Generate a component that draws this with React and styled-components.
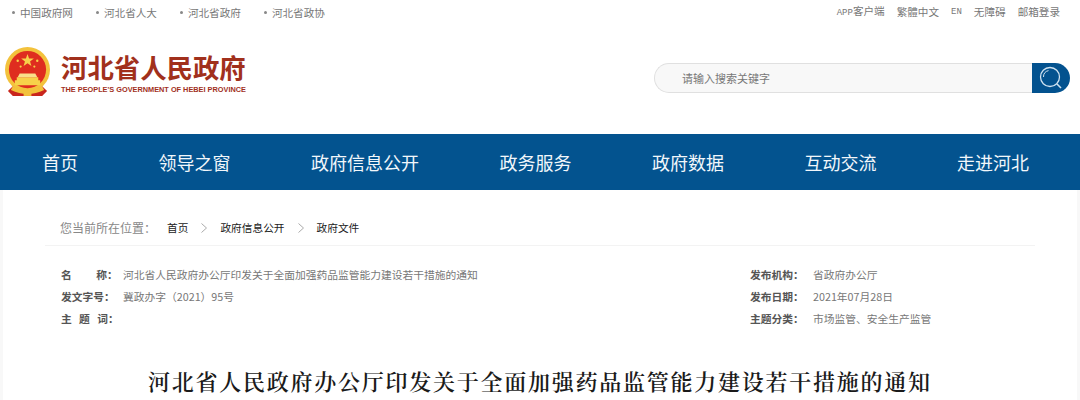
import styled, { createGlobalStyle } from "styled-components";

const CJK = `"Noto Sans CJK SC", "Liberation Sans", sans-serif`;

const GlobalStyle = createGlobalStyle`
  html, body { margin: 0; padding: 0; background: #fff; }
  body { font-family: ${CJK}; }
`;

const Page = styled.div`
  width: 1080px;
  height: 400px;
  overflow: hidden;
  background: #fff;
`;

const TopBar = styled.div`
  display: flex;
  justify-content: space-between;
  height: 24px;
  padding: 0 20px 0 12px;
  align-items: center;
  font-size: 10.6px;
  color: #777;
`;

const SiteLinks = styled.div`
  display: flex;
  gap: 23px;
`;

const SiteLink = styled.span`
  display: flex;
  align-items: center;
  gap: 5px;
  &::before {
    content: "";
    width: 3px;
    height: 3px;
    border-radius: 50%;
    background: #888;
  }
`;

const ToolLinks = styled.div`
  display: flex;
  gap: 12px;
  align-items: center;
  line-height: 14px;
`;

const Latin = styled.span`
  font-family: "Liberation Mono", monospace;
  font-size: 9px;
`;

const Masthead = styled.div`
  display: flex;
  justify-content: space-between;
  align-items: center;
  height: 110px;
  padding: 0 10px 2px 5px;
  box-sizing: border-box;
`;

const Brand = styled.div`
  display: flex;
  gap: 11px;
  align-items: center;
  margin-bottom: 13px;
`;

const BrandText = styled.div`
  display: flex;
  flex-direction: column;
  width: 184px;
  margin-top: 3px;
`;

const BrandName = styled.div`
  font-size: 26.4px;
  line-height: 32px;
  font-weight: 700;
  color: #a1301c;
  white-space: nowrap;
`;

const BrandEnglish = styled.div`
  font-family: "Liberation Sans", sans-serif;
  font-size: 7.35px;
  line-height: 10px;
  margin-top: 2px;
  font-weight: 700;
  color: #a1301c;
  white-space: nowrap;
`;

const Search = styled.div`
  display: flex;
  width: 416px;
  height: 30px;
`;

const SearchField = styled.div`
  flex: 1;
  box-sizing: border-box;
  border: 1px solid #e0e0e0;
  border-right: none;
  border-radius: 15px 0 0 15px;
  background: #f8f8f8;
  padding-left: 27px;
  font-size: 11px;
  line-height: 28px;
  color: #777;
`;

const SearchButton = styled.div`
  width: 38px;
  height: 30px;
  background: #03528f;
  border-radius: 0 15px 15px 0;
  display: flex;
  align-items: center;
  justify-content: center;
`;

const Nav = styled.nav`
  display: flex;
  justify-content: space-between;
  height: 56px;
  align-items: center;
  padding: 0 51px 0 42px;
  background: #03538f;
  color: #f2f7fb;
  font-size: 18px;
`;

const NavItem = styled.span`
  white-space: nowrap;
`;

const Body = styled.div`
  padding: 0 3px;
  background: #f8f8f8;
`;

const Main = styled.main`
  padding: 0 42px;
  background: #fff;
  height: 210px;
`;

const Crumbs = styled.div`
  display: flex;
  align-items: center;
  box-sizing: border-box;
  height: 56px;
  padding: 20px 0 0 15px;
  border-bottom: 1px solid #f3f3f3;
  font-size: 10.7px;
  color: #222;
`;

const CrumbLead = styled.span`
  font-size: 12px;
  color: #888;
  margin-right: 11px;
`;

const CrumbArrow = styled.svg`
  width: 6px;
  height: 10px;
  margin: 0 13px;
`;

const Meta = styled.div`
  display: grid;
  grid-template-columns: 689px 1fr;
  padding: 17px 0 0 16px;
`;

const MetaRow = styled.div`
  display: flex;
  height: 22px;
  align-items: center;
  font-size: 10.75px;
  color: #777;
  white-space: nowrap;
`;

const MetaLabel = styled.b`
  width: ${(p) => p.$width}px;
  flex: none;
  font-weight: 700;
  color: #555;
  white-space: pre;
`;

const Title = styled.h1`
  margin: 36px 0 0;
  text-align: center;
  font-family: "Noto Serif CJK SC", "Noto Sans CJK SC", serif;
  font-size: 22px;
  line-height: 32px;
  letter-spacing: 1.75px;
  font-weight: 600;
  color: #1a1a1a;
  white-space: nowrap;
`;

const Emblem = () => (
  <svg width="45" height="49" viewBox="0 0 46 50">
    <path d="M10 38 L3 45 L8 50 L38 50 L43 45 L36 38 Z" fill="#c9261d" />
    <circle cx="23" cy="23" r="23" fill="#f3c23c" />
    <circle cx="23" cy="23" r="19" fill="#df2d1f" />
    <path d="M23 7 l1.6 4.6 4.9 .1 -3.9 3 1.4 4.7 -4 -2.8 -4 2.8 1.4 -4.7 -3.9 -3 4.9 -.1 Z" fill="#f7d24a" />
    <circle cx="13" cy="14" r="1.2" fill="#f7d24a" />
    <circle cx="33" cy="14" r="1.2" fill="#f7d24a" />
    <circle cx="16" cy="20" r="1.1" fill="#f7d24a" />
    <circle cx="30" cy="20" r="1.1" fill="#f7d24a" />
    <path d="M12 31 h22 v3 h2 v5 H10 v-5 h2 Z" fill="#f7d24a" />
    <path d="M15 27 h16 l2 4 H13 Z" fill="#f9e08a" />
    <path d="M8 40 q15 9 30 0 l2 4 q-17 8 -34 0 Z" fill="#f3c23c" />
    <path d="M19 44 h8 v6 h-8 Z" fill="#f3c23c" />
  </svg>
);

const SearchIcon = () => (
  <svg width="26" height="26" viewBox="0 0 26 26" fill="none" stroke="#cfe2f0">
    <circle cx="12" cy="12" r="9.5" strokeWidth="1.3" />
    <path d="M5.5 12 a6.5 6.5 0 0 1 5 -6.4" strokeWidth="1" />
    <path d="M19 19 L23 23" strokeWidth="1.6" />
  </svg>
);

const Arrow = () => (
  <CrumbArrow viewBox="0 0 6 10" fill="none" stroke="#aaa" strokeWidth="1">
    <path d="M.5 .5 L5.5 5 L.5 9.5" />
  </CrumbArrow>
);

const navItems = ["首页", "领导之窗", "政府信息公开", "政务服务", "政府数据", "互动交流", "走进河北"];
const sites = ["中国政府网", "河北省人大", "河北省政府", "河北省政协"];

const App = () => (
  <Page>
    <GlobalStyle />
    <TopBar>
      <SiteLinks>
        {sites.map((s) => (
          <SiteLink key={s}>{s}</SiteLink>
        ))}
      </SiteLinks>
      <ToolLinks>
        <span>
          <Latin>APP</Latin>客户端
        </span>
        <span>繁體中文</span>
        <Latin>EN</Latin>
        <span>无障碍</span>
        <span>邮箱登录</span>
      </ToolLinks>
    </TopBar>
    <Masthead>
      <Brand>
        <Emblem />
        <BrandText>
          <BrandName>河北省人民政府</BrandName>
          <BrandEnglish>THE PEOPLE'S GOVERNMENT OF HEBEI PROVINCE</BrandEnglish>
        </BrandText>
      </Brand>
      <Search>
        <SearchField>请输入搜索关键字</SearchField>
        <SearchButton>
          <SearchIcon />
        </SearchButton>
      </Search>
    </Masthead>
    <Nav>
      {navItems.map((n) => (
        <NavItem key={n}>{n}</NavItem>
      ))}
    </Nav>
    <Body>
      <Main>
        <Crumbs>
          <CrumbLead>您当前所在位置：</CrumbLead>
          <span>首页</span>
          <Arrow />
          <span>政府信息公开</span>
          <Arrow />
          <span>政府文件</span>
        </Crumbs>
        <Meta>
          <MetaRow>
            <MetaLabel $width={62}>名          称：</MetaLabel>
            河北省人民政府办公厅印发关于全面加强药品监管能力建设若干措施的通知
          </MetaRow>
          <MetaRow>
            <MetaLabel $width={63}>发布机构：</MetaLabel>
            省政府办公厅
          </MetaRow>
          <MetaRow>
            <MetaLabel $width={62}>发文字号：</MetaLabel>
            冀政办字（2021）95号
          </MetaRow>
          <MetaRow>
            <MetaLabel $width={63}>发布日期：</MetaLabel>
            2021年07月28日
          </MetaRow>
          <MetaRow>
            <MetaLabel $width={62}>主   题   词：</MetaLabel>
          </MetaRow>
          <MetaRow>
            <MetaLabel $width={63}>主题分类：</MetaLabel>
            市场监管、安全生产监管
          </MetaRow>
        </Meta>
        <Title>河北省人民政府办公厅印发关于全面加强药品监管能力建设若干措施的通知</Title>
      </Main>
    </Body>
  </Page>
);

export default App;
